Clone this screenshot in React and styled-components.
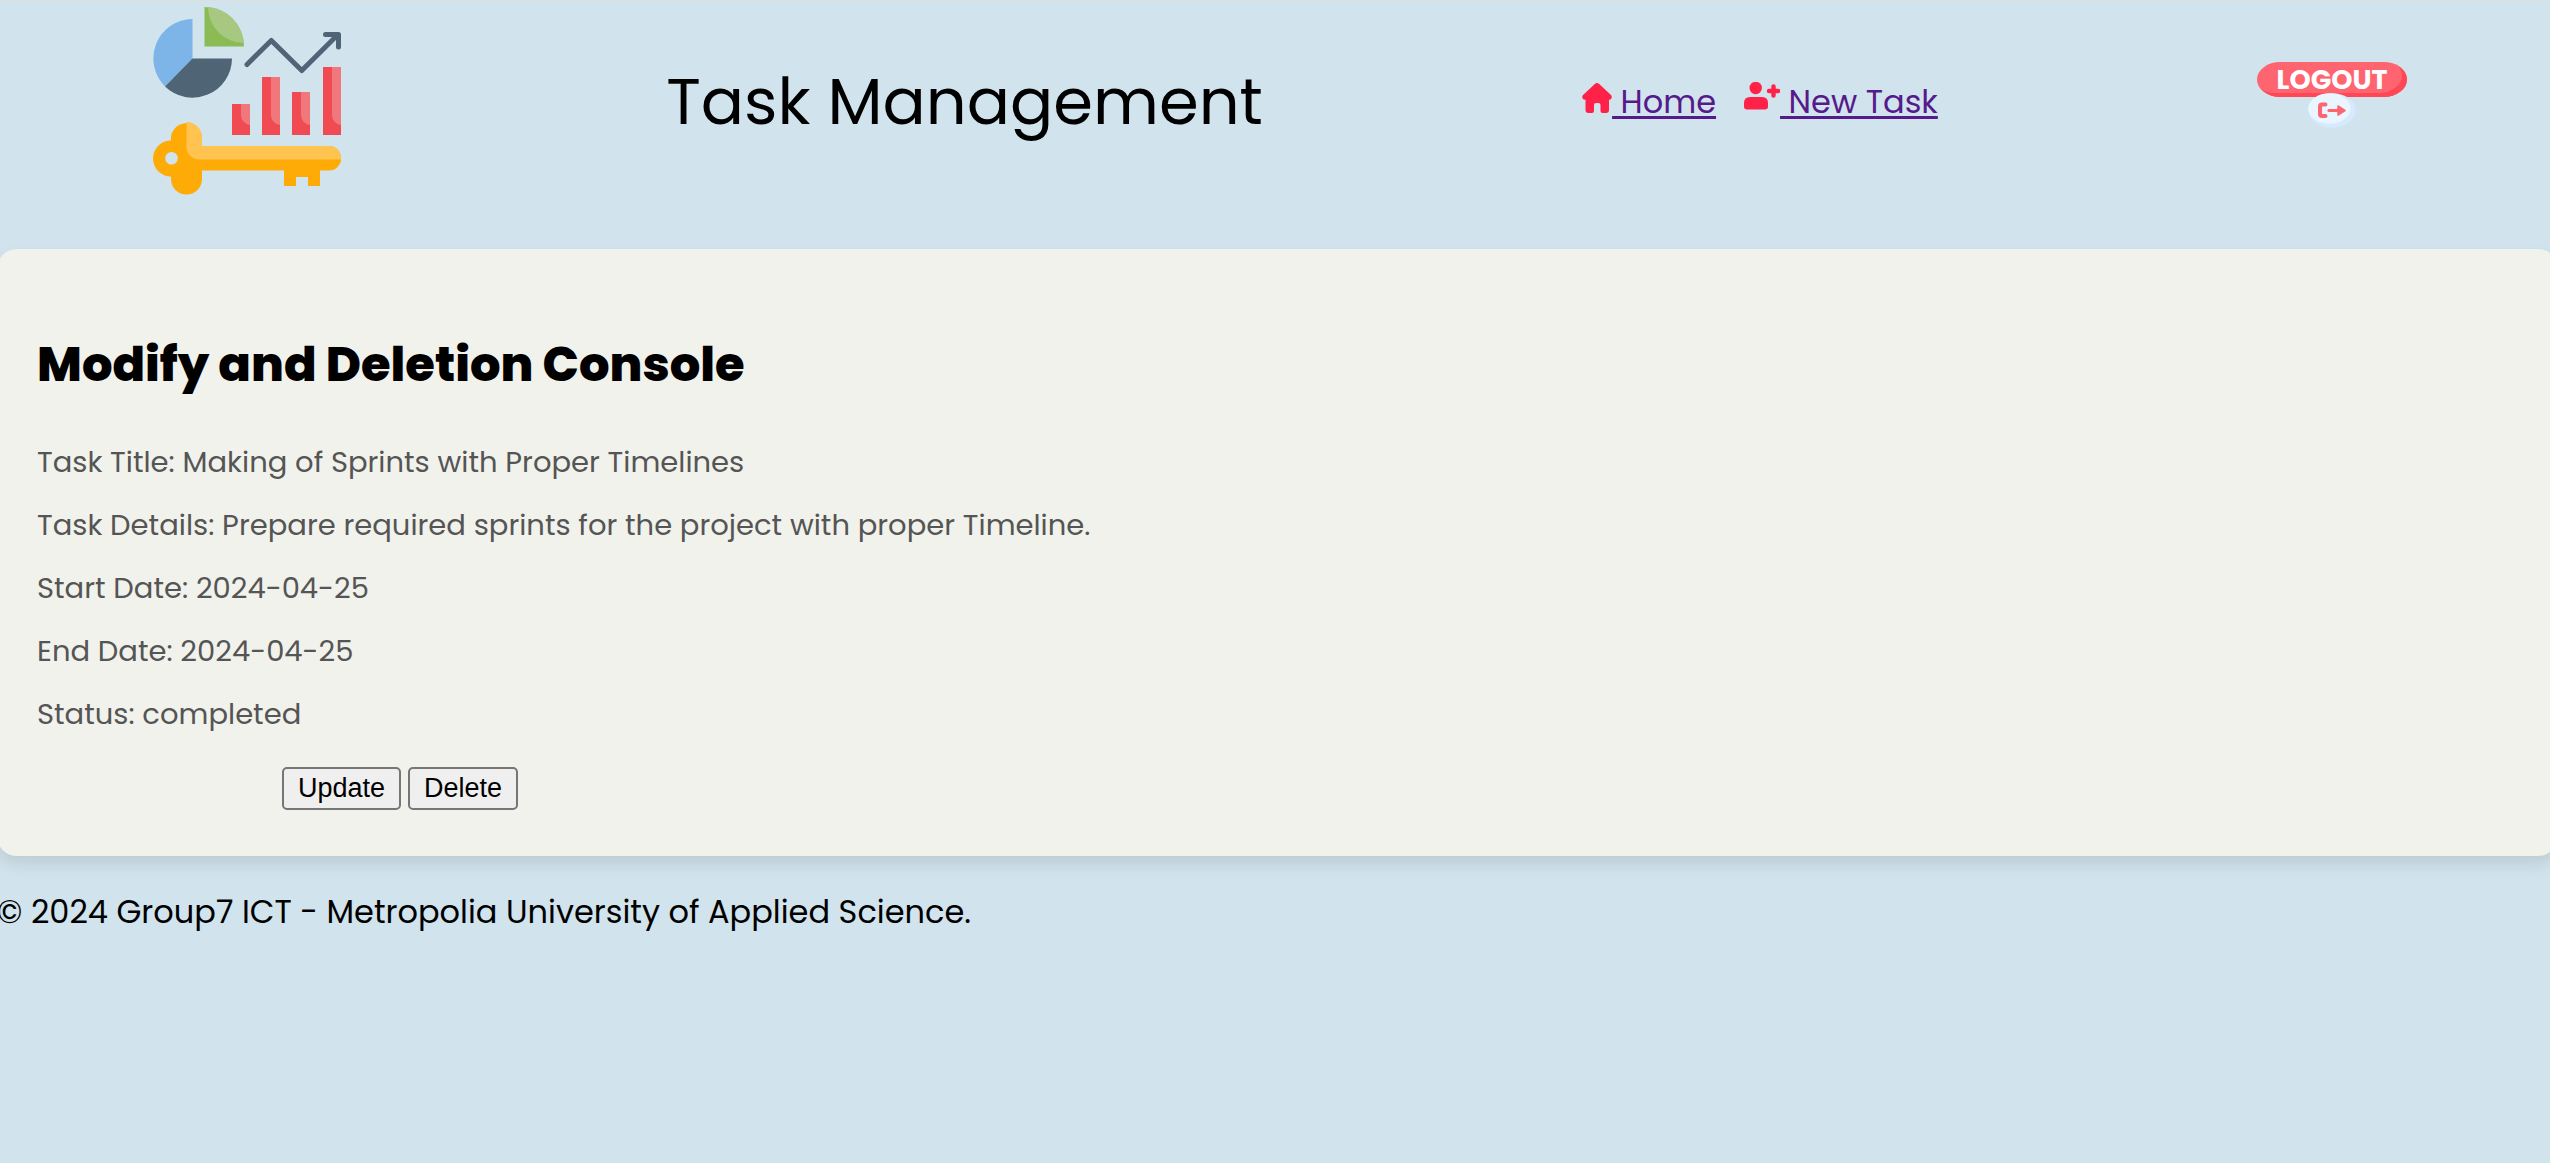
import React from "react";
import styled, { createGlobalStyle } from "styled-components";

const GlobalStyle = createGlobalStyle`
  *, *::before, *::after { box-sizing: border-box; }
  body {
    margin: 0;
    min-height: 100vh;
    overflow-x: hidden;
    border-top: 1px solid #dddfde;
    background: #d1e3ec;
    color: #000;
    font-family: Poppins, Inter, "Open Sans", sans-serif;
    font-size: 32px;
    line-height: 48px;
  }
`;

const Page = styled.div`
  margin: 0 -8px 0 -3px;
`;

const Header = styled.header`
  display: flex;
  justify-content: space-between;
  align-items: flex-start;
  padding: 6px 151px 54px 156px;
`;

const Logo = styled.svg`
  display: block;
  width: 188px;
  height: 188px;
  margin-right: 6px;
`;

const SiteTitle = styled.div`
  padding-top: 47px;
  font-size: 64px;
  line-height: 96px;
`;

const Nav = styled.nav`
  display: flex;
  gap: 28px;
  padding-top: 71px;
`;

const NavLink = styled.a`
  display: flex;
  color: #551a8b;
  text-decoration: none;

  svg {
    display: block;
    height: 32px;
    width: ${(p) => p.$iconWidth}px;
    margin-top: 4px;
    fill: #ff2147;
  }

  span {
    white-space: pre;
    text-decoration: underline;
    text-decoration-thickness: 3px;
    text-underline-offset: 3px;
  }
`;

const LogoutButton = styled.button`
  display: flex;
  flex-direction: column;
  align-items: center;
  margin-top: 55px;
  padding: 0;
  border: 0;
  background: none;
  cursor: pointer;
`;

const Pill = styled.span`
  width: 150px;
  border-radius: 24px / 18px;
  background: #ff6471;
  box-shadow: inset -5px -4px 0 #ff4756;
  color: #fff;
  font: 700 27px/35px Poppins, Inter, sans-serif;
  text-align: center;
`;

const ExitBadge = styled.svg`
  display: block;
  width: 48px;
  height: 35px;
  margin-top: -4px;
`;

const Card = styled.main`
  padding: 80px 40px 46px;
  border-radius: 20px;
  background: #f1f2ec;
  box-shadow: 0 8px 16px rgba(0, 0, 0, 0.1);
`;

const Heading = styled.h1`
  margin: 0 0 40px;
  font-size: 48px;
  line-height: 72px;
  font-weight: 800;
`;

const Detail = styled.p`
  margin: 0 0 20px;
  color: #555;
  font-size: 29px;
  line-height: 43px;
`;

const Actions = styled.div`
  display: flex;
  gap: 7px;
  margin: 31px 0 0 245px;
`;

const ActionButton = styled.button`
  padding: 4px 14px;
  border: 2px solid #767676;
  border-radius: 5px;
  background: #efefef;
  color: #000;
  font: 27px/31px "Liberation Sans", Arial, sans-serif;
`;

const Footer = styled.footer`
  padding: 32px 0;
`;

const bars = [
  { x: 79, y: 97, h: 31 },
  { x: 109, y: 70, h: 58 },
  { x: 139, y: 85, h: 43 },
  { x: 170, y: 60, h: 68 },
];

function BrandLogo() {
  return (
    <Logo viewBox="0 0 188 188" role="img" aria-label="Task Management logo">
      <path d="M39.500 12A39.500 39.500 0 0 0 12 79.500L39.500 52Z" fill="#7db5e8" />
      <path d="M39.500 51.500H79A39.500 39.500 0 0 1 12 79.500Z" fill="#4f6576" />
      <path d="M51.500 0A39.500 39.500 0 0 1 91 39.500H51.500Z" fill="#8abb55" />
      <path d="M55 0A39.500 39.500 0 0 1 91 36A36 36 0 0 1 55 0Z" fill="#a6c881" />
      <path d="M94 57.500L118.300 33.500L148.800 63.500L184 28.500M172.500 27.500H185.500V40" fill="none" stroke="#4f6576" strokeWidth="5" strokeLinejoin="round" strokeLinecap="round" />
      {bars.map((b) => (
        <g key={b.x}>
          <rect x={b.x} y={b.y} width="18" height={b.h} fill="#f04b52" />
          <path d={`M${b.x + 9} ${b.y}h9V118a10 10 0 0 1 -9 -10z`} fill="#f0777c" />
        </g>
      ))}
      <path fillRule="evenodd" d="M18 133.500A15.500 15.500 0 0 1 49 130V139H176A12 12 0 0 1 176 163.500H167V179H155V170H143V179H131V163.500H49V172A15.500 15.500 0 0 1 18 172V169.500A18 18 0 0 1 18 133.500ZM18.500 145A6.300 6.300 0 1 0 18.500 157.600A6.300 6.300 0 1 0 18.500 145Z" fill="#ffab07" />
      <path d="M33.500 115A15.500 15.500 0 0 1 49 130V139H176A12 12 0 0 1 188 152.500H46A12.500 12.500 0 0 1 33.500 140Z" fill="#ffc34f" />
    </Logo>
  );
}

function HomeIcon() {
  return (
    <svg viewBox="0 0 30 32" aria-hidden="true">
      <path d="M12.800 2Q15 0 17.200 2L29 13Q30.500 15 29 17Q28 18 27 17.500V28Q27 31 24 31H20.500Q18.500 31 18.500 29V23Q18.500 21 16.500 21H14Q12 21 12 23V29Q12 31 10 31H6.500Q3.500 31 3.500 28V17.500Q2 18 1 17Q-.500 15 1 13Z" />
    </svg>
  );
}

function UserPlusIcon() {
  return (
    <svg viewBox="0 0 36 32" aria-hidden="true">
      <circle cx="11.700" cy="6" r="6.200" />
      <path d="M6 15H18Q24 15 24 21V24.500Q24 27.500 21 27.500H3Q0 27.500 0 24.500V21Q0 15 6 15Z" />
      <path d="M29.500 4.500V13.500M25 9H34" fill="none" stroke="#ff2147" strokeWidth="4.400" strokeLinecap="round" />
    </svg>
  );
}

const details = [
  ["Task Title", "Making of Sprints with Proper Timelines"],
  ["Task Details", "Prepare required sprints for the project with proper Timeline."],
  ["Start Date", "2024-04-25"],
  ["End Date", "2024-04-25"],
  ["Status", "completed"],
];

export default function App() {
  return (
    <Page>
      <GlobalStyle />
      <Header>
        <BrandLogo />
        <SiteTitle>Task Management</SiteTitle>
        <Nav>
          <NavLink href="#home" $iconWidth={30}>
            <HomeIcon />
            <span> Home</span>
          </NavLink>
          <NavLink href="#new-task" $iconWidth={36}>
            <UserPlusIcon />
            <span> New Task</span>
          </NavLink>
        </Nav>
        <LogoutButton type="button">
          <Pill>LOGOUT</Pill>
          <ExitBadge viewBox="0 0 48 35" aria-hidden="true">
            <ellipse cx="24" cy="17.500" rx="23.700" ry="17.300" fill="#d6e9fe" />
            <ellipse cx="21.500" cy="15.500" rx="21.300" ry="15.300" fill="#e9f5ff" />
            <path d="M17.500 11.500H14Q12 11.500 12 13.500V21Q12 23 14 23H17.500" fill="none" stroke="#ff6471" strokeWidth="4" strokeLinecap="round" />
            <path d="M21 17.500H34" stroke="#ff6471" strokeWidth="3.200" strokeLinecap="round" />
            <path d="M30 13L37 17.500L30 22Z" fill="#ff6471" stroke="#ff6471" strokeWidth="1.500" strokeLinejoin="round" />
          </ExitBadge>
        </LogoutButton>
      </Header>
      <Card>
        <Heading>Modify and Deletion Console</Heading>
        {details.map(([label, value]) => (
          <Detail key={label}>
            {label}: {value}
          </Detail>
        ))}
        <Actions>
          <ActionButton type="button">Update</ActionButton>
          <ActionButton type="button">Delete</ActionButton>
        </Actions>
      </Card>
      <Footer>© 2024 Group7 ICT - Metropolia University of Applied Science.</Footer>
    </Page>
  );
}
